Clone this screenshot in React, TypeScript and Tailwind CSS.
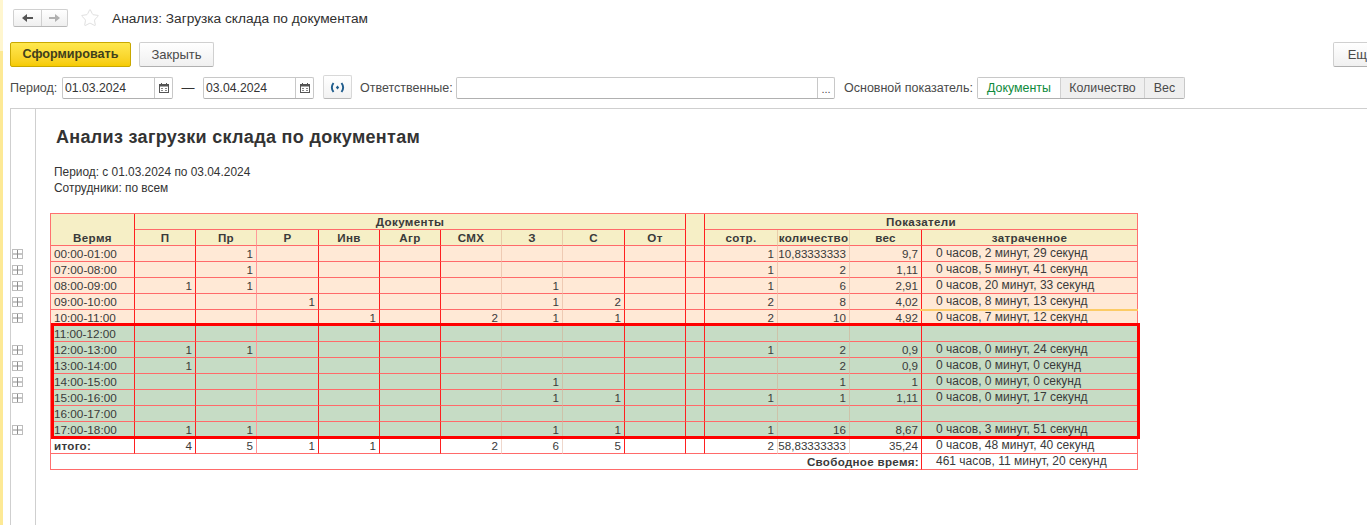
import { Star } from "lucide-react";

const cols = [84, 61, 61, 62, 61, 61, 61, 61, 62, 61, 19, 73, 72, 72, 216];

// цвет правой границы по колонкам
const lineClass = [
  "border-r-[#ff2020]",
  "border-r-[#ff2020]",
  "border-r-[#ff9a9a]",
  "border-r-[#ff2020]",
  "border-r-[#ff2020]",
  "border-r-[#ff2020]",
  "border-r-[#d89a80]/40",
  "border-r-[#d89a80]/40",
  "border-r-[#ff2020]",
  "border-r-[#ff2020]",
  "border-r-[#ff2020]",
  "border-r-[#d89a80]/40",
  "border-r-[#d89a80]/40",
  "border-r-[#ff2020]",
  "border-r-[#ff7070]",
];

type Row = { time: string; vals: string[]; spent: string; tree: boolean };

const rows: Row[] = [
  { time: "00:00-01:00", vals: ["", "1", "", "", "", "", "", "", "", "", "1", "10,83333333", "9,7"], spent: "0 часов, 2 минут, 29 секунд", tree: true },
  { time: "07:00-08:00", vals: ["", "1", "", "", "", "", "", "", "", "", "1", "2", "1,11"], spent: "0 часов, 5 минут, 41 секунд", tree: true },
  { time: "08:00-09:00", vals: ["1", "1", "", "", "", "", "1", "", "", "", "1", "6", "2,91"], spent: "0 часов, 20 минут, 33 секунд", tree: true },
  { time: "09:00-10:00", vals: ["", "", "1", "", "", "", "1", "2", "", "", "2", "8", "4,02"], spent: "0 часов, 8 минут, 13 секунд", tree: true },
  { time: "10:00-11:00", vals: ["", "", "", "1", "", "2", "1", "1", "", "", "2", "10", "4,92"], spent: "0 часов, 7 минут, 12 секунд", tree: true },
  { time: "11:00-12:00", vals: ["", "", "", "", "", "", "", "", "", "", "", "", ""], spent: "", tree: false },
  { time: "12:00-13:00", vals: ["1", "1", "", "", "", "", "", "", "", "", "1", "2", "0,9"], spent: "0 часов, 0 минут, 24 секунд", tree: true },
  { time: "13:00-14:00", vals: ["1", "", "", "", "", "", "", "", "", "", "", "2", "0,9"], spent: "0 часов, 0 минут, 0 секунд", tree: true },
  { time: "14:00-15:00", vals: ["", "", "", "", "", "", "1", "", "", "", "", "1", "1"], spent: "0 часов, 0 минут, 0 секунд", tree: true },
  { time: "15:00-16:00", vals: ["", "", "", "", "", "", "1", "1", "", "", "1", "1", "1,11"], spent: "0 часов, 0 минут, 17 секунд", tree: true },
  { time: "16:00-17:00", vals: ["", "", "", "", "", "", "", "", "", "", "", "", ""], spent: "", tree: false },
  { time: "17:00-18:00", vals: ["1", "1", "", "", "", "", "1", "1", "", "", "1", "16", "8,67"], spent: "0 часов, 3 минут, 51 секунд", tree: true },
];

const subHeads = ["П", "Пр", "Р", "Инв", "Агр", "СМХ", "З", "С", "От"];
const cellBase = "h-4 p-0 border-r border-b border-b-[#ff6a6a] overflow-hidden whitespace-nowrap";
const headBase = "h-4 p-0 border-r border-b border-b-[#ff6a6a] bg-[#f6efc6] text-center font-bold text-[#3a3a3a] tracking-[0.35px]";

function CalendarIcon() {
  return (
    <svg width="10" height="10" viewBox="0 0 10 10" className="block">
      <rect x="0.5" y="1.5" width="9" height="8" fill="none" stroke="#555" />
      <rect x="0.5" y="1.5" width="9" height="2" fill="#555" />
      <rect x="2" y="0" width="1" height="2" fill="#555" />
      <rect x="7" y="0" width="1" height="2" fill="#555" />
      <rect x="2" y="5" width="2" height="1" fill="#888" />
      <rect x="6" y="5" width="2" height="1" fill="#888" />
      <rect x="2" y="7" width="2" height="1" fill="#888" />
      <rect x="6" y="7" width="2" height="1" fill="#888" />
    </svg>
  );
}

function DateField({ value }: { value: string }) {
  return (
    <div className="mt-[2px] flex h-[22px] w-[111px] rounded-[2px] border border-[#c8c8c8] border-b-[#b0b0b0] bg-white">
      <div className="w-[91px] pl-[2px] text-[12.2px] leading-[20px] text-[#333]">{value}</div>
      <div className="flex flex-1 items-center justify-center border-l border-[#c8c8c8]">
        <CalendarIcon />
      </div>
    </div>
  );
}

function Arrow({ dir, color }: { dir: "l" | "r"; color: string }) {
  return (
    <svg width="11" height="8" viewBox="0 0 11 8" className={dir === "r" ? "block rotate-180" : "block"}>
      <path d="M0 4 L5 0 V3 H11 V5 H5 V8 Z" fill={color} />
    </svg>
  );
}

function Tree() {
  return (
    <svg width="11" height="10" viewBox="0 0 11 10" className="block">
      <rect x="0.5" y="0.5" width="10" height="9" fill="#fff" stroke="#bdbdbd" />
      <path d="M1 5 H10 M5.5 1 V9" stroke="#8c8c8c" />
    </svg>
  );
}

export default function App() {
  return (
    <div className="flex h-[525px] w-[1367px] overflow-hidden bg-white font-['Liberation_Sans',Arial,sans-serif] text-[#333]">
      <div className="flex w-[3px] shrink-0 flex-col">
        <div className="h-[51px] bg-[#fff6cf]" />
        <div className="flex-1 bg-[#fde995]" />
      </div>

      <div className="flex min-w-0 flex-1 flex-col pl-[7px]">
        {/* шапка формы */}
        <div className="ml-[3px] mt-[9px] flex h-[18px] items-center">
          <div className="flex h-[18px] w-[55px] rounded-[2px] border border-[#d0d0d0] border-b-[#b8b8b8] bg-gradient-to-b from-white to-[#efefef]">
            <div className="flex w-[28px] items-center justify-center border-r border-[#d0d0d0]">
              <Arrow dir="l" color="#555" />
            </div>
            <div className="flex flex-1 items-center justify-center">
              <Arrow dir="r" color="#b0b0b0" />
            </div>
          </div>
          <Star size={20} strokeWidth={1} className="ml-[12px] text-[#d8d8d8]" />
          <div className="ml-[12px] pt-[1px] text-[13.7px] leading-[18px] text-[#2f2f2f]">Анализ: Загрузка склада по документам</div>
        </div>

        <div className="mt-[15px] flex h-[25px]">
          <button
            type="button"
            className="h-[25px] w-[121px] rounded-[2px] border border-[#c9a800] bg-gradient-to-b from-[#ffe84d] to-[#f6cb00] text-[12.6px] font-bold text-[#40401c]"
          >
            Сформировать
          </button>
          <button
            type="button"
            className="ml-[8px] h-[25px] w-[75px] rounded-[2px] border border-[#d0d0d0] border-b-[#b0b0b0] bg-gradient-to-b from-white to-[#f0f0f0] text-[13px] text-[#4a4a4a]"
          >
            Закрыть
          </button>
          <button
            type="button"
            className="ml-auto mr-[-24px] h-[25px] w-[58px] shrink-0 rounded-[2px] border border-[#d0d0d0] border-b-[#b0b0b0] bg-gradient-to-b from-white to-[#f0f0f0] pr-[2px] text-[13px] text-[#4a4a4a]"
          >
            Ещё
          </button>
        </div>

        <div className="mt-[8px] flex h-[24px] items-center text-[12.5px] text-[#4a4a4a]">
          <span className="mt-[2px] w-[52px]">Период:</span>
          <DateField value="01.03.2024" />
          <span className="mt-[2px] w-[30px] text-center text-[13px] text-[#333]">—</span>
          <DateField value="03.04.2024" />
          <button
            type="button"
            className="ml-[9px] flex h-[24px] w-[29px] items-center justify-center rounded-[2px] border border-[#d8d8d8] border-b-[#b8b8b8] bg-gradient-to-b from-white to-[#f2f2f2]"
          >
            <svg width="15" height="11" viewBox="0 0 15 11" className="block">
              <path d="M3.5 1 Q0.2 5.5 3.5 10 M11.5 1 Q14.8 5.5 11.5 10" fill="none" stroke="#1f5c8c" strokeWidth="1.9" />
              <path d="M5.8 5.5 L7.5 3.4 L9.2 5.5 L7.5 7.6 Z" fill="#1f5c8c" />
            </svg>
          </button>
          <span className="ml-[8px] mt-[2px] w-[96px] whitespace-nowrap">Ответственные:</span>
          <div className="mt-[2px] flex h-[22px] w-[379px] rounded-[2px] border border-[#c8c8c8] border-b-[#b0b0b0] bg-white">
            <div className="flex-1" />
            <div className="flex w-[17px] items-end justify-center border-l border-[#c8c8c8] pb-[2px] text-[11px] leading-[14px]">...</div>
          </div>
          <span className="ml-[9px] mt-[2px] w-[133px] whitespace-nowrap">Основной показатель:</span>
          <div className="mt-[2px] flex h-[22px] rounded-[2px] border border-[#c8c8c8] border-b-[#b0b0b0] text-[12.4px] leading-[20px]">
            <div className="w-[82px] bg-white text-center text-[#0e8a3c]">Документы</div>
            <div className="w-[84px] border-l border-[#d0d0d0] bg-[#efefef] text-center">Количество</div>
            <div className="w-[40px] border-l border-[#d0d0d0] bg-[#efefef] text-center">Вес</div>
          </div>
        </div>

        {/* отчет */}
        <div className="mt-[9px] flex min-h-0 flex-1 border-l border-t border-[#cfcfcf]">
          <div className="w-[25px] shrink-0 border-r border-[#cfcfcf] pl-[1px] pt-[136px]">
            {rows.map((r) => (
              <div key={r.time} className="h-4 pt-[4px]">
                {r.tree && <Tree />}
              </div>
            ))}
          </div>

          <div className="min-w-0 flex-1 pl-[14px] pt-[17px]">
            <div className="ml-[6px] text-[18px] font-bold leading-[22px] tracking-[0.32px] text-[#333]">
              Анализ загрузки склада по документам
            </div>
            <div className="ml-[4px] mt-[16px] text-[11.9px] leading-4 text-[#333]">Период: с 01.03.2024 по 03.04.2024</div>
            <div className="ml-[4px] text-[11.9px] leading-4 text-[#333]">Сотрудники: по всем</div>

            <div className="relative mt-[17px] w-[1088px]">
              <table className="w-[1088px] table-fixed border-separate border-spacing-0 border-l border-t border-[#ff7070] text-[11.6px] leading-[15px] text-[#3a3a3a]">
                <colgroup>
                  {cols.map((w, i) => (
                    <col key={i} style={{ width: w }} />
                  ))}
                </colgroup>
                <thead>
                  <tr>
                    <th rowSpan={2} className={`${headBase} border-r-[#ff2020] align-bottom`}>Вермя</th>
                    <th colSpan={9} className={`${headBase} border-r-[#ff2020]`}>Документы</th>
                    <th rowSpan={2} className={`${headBase} border-r-[#ff2020]`} />
                    <th colSpan={4} className={`${headBase} border-r-[#ff7070]`}>Показатели</th>
                  </tr>
                  <tr>
                    {subHeads.map((h, i) => (
                      <th key={h} className={`${headBase} ${lineClass[i + 1]}`}>{h}</th>
                    ))}
                    <th className={`${headBase} ${lineClass[11]}`}>сотр.</th>
                    <th className={`${headBase} ${lineClass[12]}`}>количество</th>
                    <th className={`${headBase} ${lineClass[13]}`}>вес</th>
                    <th className={`${headBase} ${lineClass[14]}`}>затраченное</th>
                  </tr>
                </thead>
                <tbody>
                  {rows.map((r, idx) => {
                    const bg = idx < 5 ? "bg-[#ffe9d6]" : "bg-[#c6dcc5]";
                    return (
                      <tr key={r.time}>
                        <td className={`${cellBase} ${bg} ${lineClass[0]} pl-[3px] text-[11.75px]`}>{r.time}</td>
                        {r.vals.map((v, i) => (
                          <td key={i} className={`${cellBase} ${bg} ${lineClass[i + 1]} pr-[3px] text-right`}>{v}</td>
                        ))}
                        <td className={`${cellBase} ${bg} ${lineClass[14]} pl-[14px] text-[12px]`}>{r.spent}</td>
                      </tr>
                    );
                  })}
                  <tr>
                    <td className={`${cellBase} ${lineClass[0]} pl-[3px] font-bold tracking-[0.3px]`}>итого:</td>
                    {["4", "5", "1", "1", "", "2", "6", "5", "", "", "2", "58,83333333", "35,24"].map((v, i) => (
                      <td key={i} className={`${cellBase} ${lineClass[i + 1]} pr-[3px] text-right`}>{v}</td>
                    ))}
                    <td className={`${cellBase} ${lineClass[14]} pl-[14px] text-[12px]`}>0 часов, 48 минут, 40 секунд</td>
                  </tr>
                  <tr>
                    <td colSpan={14} className={`${cellBase} border-r-[#ff2020] pr-[2px] text-right font-bold tracking-[0.3px]`}>Свободное время:</td>
                    <td className={`${cellBase} ${lineClass[14]} pl-[14px] text-[12px]`}>461 часов, 11 минут, 20 секунд</td>
                  </tr>
                </tbody>
              </table>

              {/* выделение поверх таблицы */}
              <div className="pointer-events-none absolute left-[1px] top-[110px] h-[116px] w-[1089px] border-[3px] border-[#ff0000]" />
              <div className="pointer-events-none absolute left-[870px] top-[96px] h-[2px] w-[218px] bg-[#fccb66]" />
            </div>
          </div>
        </div>
      </div>
    </div>
  );
}
